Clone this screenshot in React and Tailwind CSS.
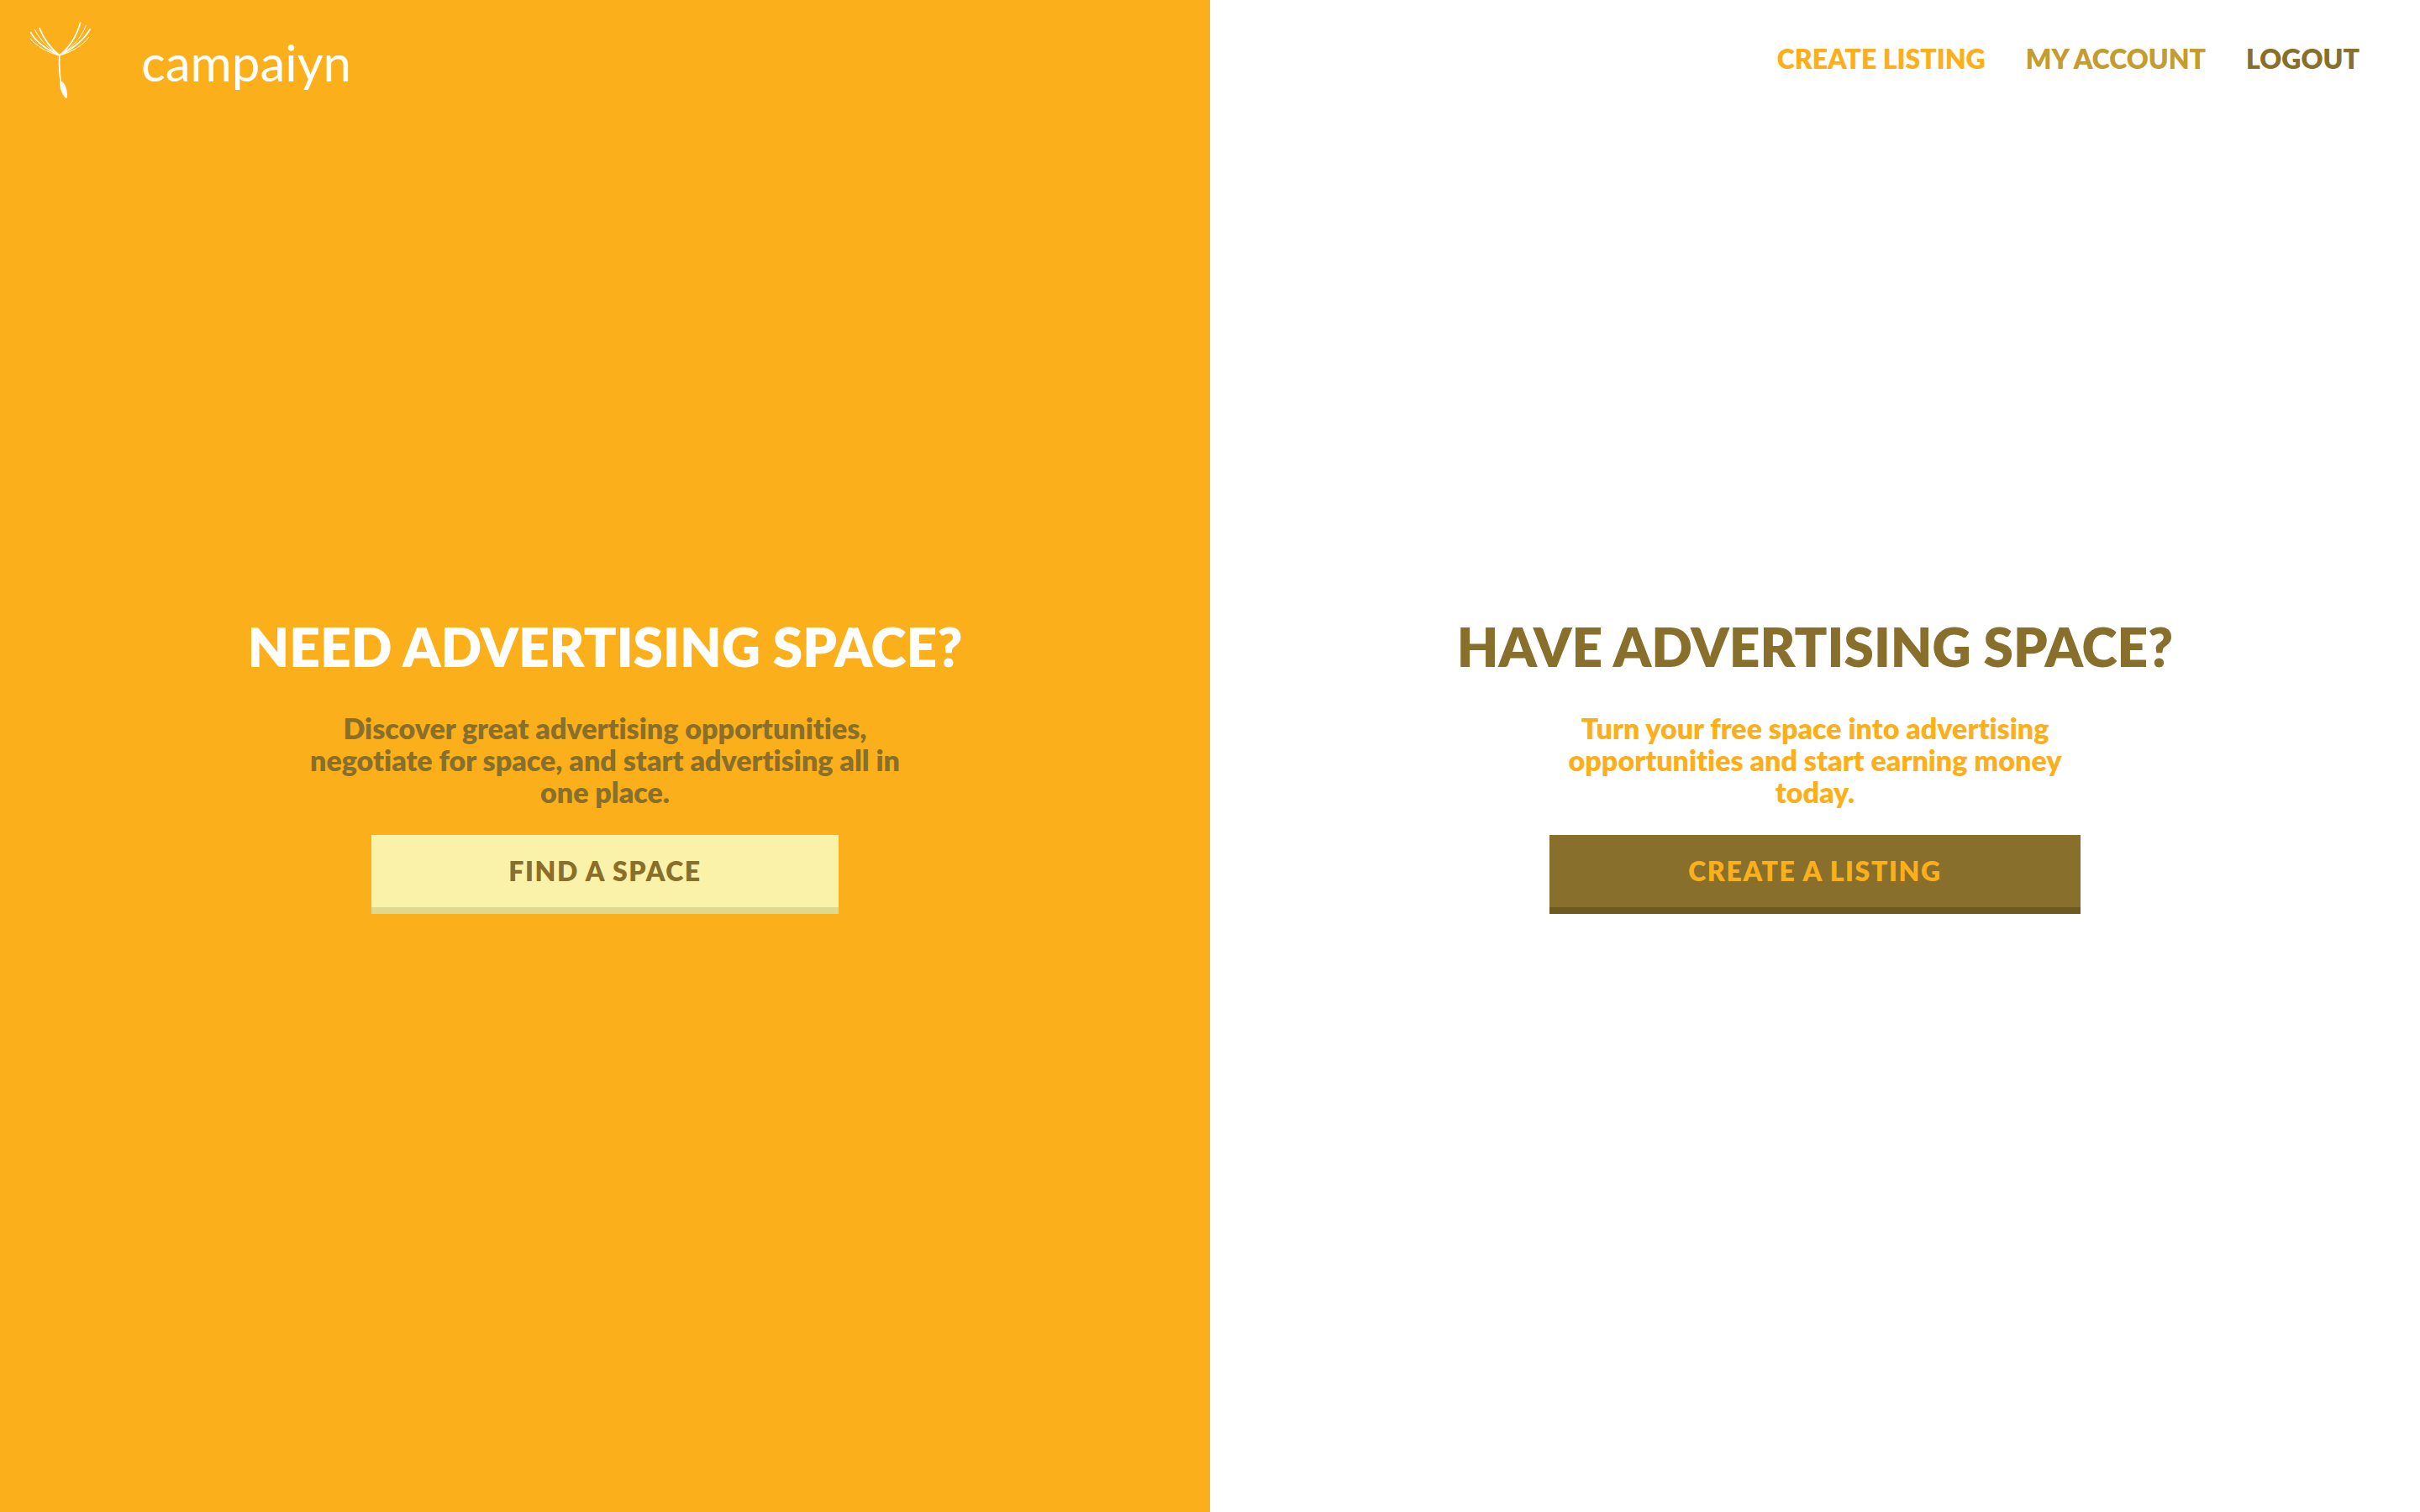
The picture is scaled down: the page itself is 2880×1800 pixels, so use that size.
const navLinks = [
  { label: "CREATE LISTING", className: "text-[#fbb01b]" },
  { label: "MY ACCOUNT", className: "text-[#c49c2f]" },
  { label: "LOGOUT", className: "text-[#886f2b]" },
];

function SeedLogo() {
  return (
    <svg
      className="h-24 w-20 shrink-0"
      viewBox="96 72 240 288"
      fill="none"
      stroke="white"
      strokeLinecap="round"
      aria-hidden="true"
    >
      <g strokeWidth="5">
        <path d="M212 198C172 179 128 152 110 116" />
        <path d="M212 198C183 174 157 141 141 101" />
        <path d="M212 198C246 171 274 128 287 81" />
        <path d="M212 198C256 176 297 147 321 105" />
      </g>
      <g strokeWidth="3">
        <path d="M212 198C169 187 134 168 108 138" />
        <path d="M212 198C177 177 146 148 124 106" />
        <path d="M212 198C252 174 289 139 307 91" />
        <path d="M212 198C260 185 296 161 317 133" />
      </g>
      <path strokeWidth="5" d="M212 198C211 230 212 262 217 291" />
      <path
        fill="white"
        stroke="none"
        d="M214 289C221 288 232 300 236 314C240 328 241 341 239 349Q237 352 233 349C221 338 211 310 214 289Z"
      />
    </svg>
  );
}

function Pitch({ title, titleClass, text, textClass, action, buttonClass }) {
  return (
    <div className="flex flex-1 flex-col items-center justify-center pt-5 pb-36 text-center">
      <h2 className={`text-[64px] leading-[76px] font-extrabold ${titleClass}`}>{title}</h2>
      <p className={`mt-10 text-[34px] leading-[38px] font-extrabold ${textClass}`}>{text}</p>
      <button
        type="button"
        className={`mt-8 border-b-8 py-6 text-[32px] leading-[38px] font-extrabold tracking-wider ${buttonClass}`}
      >
        {action}
      </button>
    </div>
  );
}

export default function App() {
  return (
    <main className="grid min-h-screen grid-cols-2 font-['Lato',sans-serif] [font-variant-ligatures:none]">
      <section className="flex flex-col bg-[#fbb01b]">
        <header className="flex h-36 items-center pl-8">
          <a href="#home" className="flex items-center gap-14 text-white">
            <SeedLogo />
            <span className="pt-1 text-[60px] leading-[64px]">campaiyn</span>
          </a>
        </header>
        <Pitch
          title="NEED ADVERTISING SPACE?"
          titleClass="text-white"
          text="Discover great advertising opportunities, negotiate for space, and start advertising all in one place."
          textClass="max-w-[720px] text-[#886f2b]"
          action="FIND A SPACE"
          buttonClass="min-w-[556px] border-[#dcd994] bg-[#faf2a8] text-[#886f2b]"
        />
      </section>
      <section className="flex flex-col bg-white">
        <header className="flex h-36 items-center justify-end pr-[72px]">
          <nav className="flex gap-12 pb-1 text-[32px] leading-[38px] font-extrabold">
            {navLinks.map((link) => (
              <a key={link.label} href="#" className={link.className}>
                {link.label}
              </a>
            ))}
          </nav>
        </header>
        <Pitch
          title="HAVE ADVERTISING SPACE?"
          titleClass="text-[#886f2b]"
          text="Turn your free space into advertising opportunities and start earning money today."
          textClass="max-w-[640px] text-[#fbb01b]"
          action="CREATE A LISTING"
          buttonClass="min-w-[632px] border-[#6e5a1f] bg-[#886f2b] text-[#fbb01b]"
        />
      </section>
    </main>
  );
}
